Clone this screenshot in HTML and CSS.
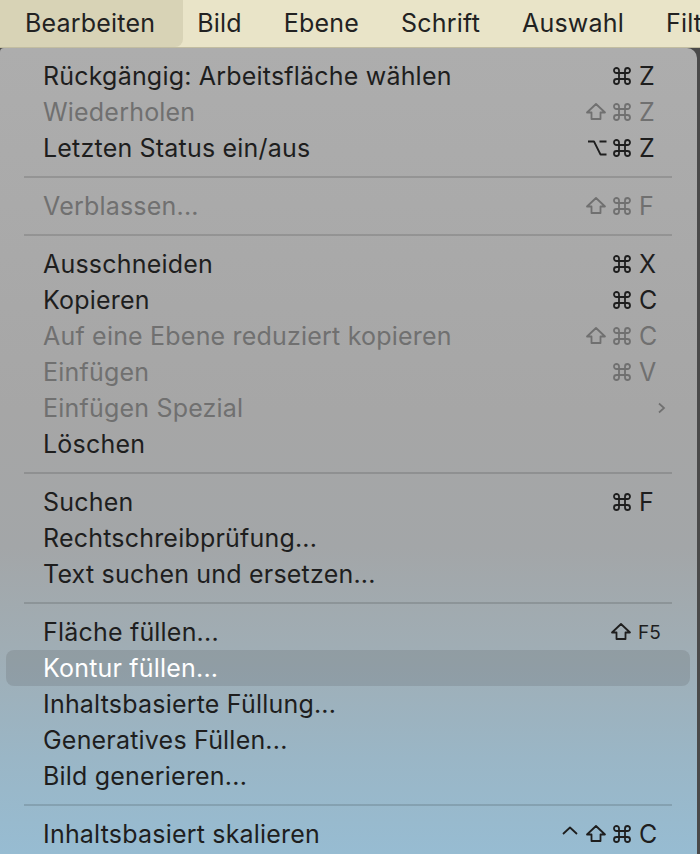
FILE: index.html
```html
<!DOCTYPE html>
<html lang="de">
<head>
<meta charset="utf-8">
<title>Bearbeiten</title>
<link rel="stylesheet" href="styles.css">
</head>
<body>
<div class="screen">
  <nav class="menubar">
    <span class="mb-item active">Bearbeiten</span>
    <span class="mb-item">Bild</span>
    <span class="mb-item">Ebene</span>
    <span class="mb-item">Schrift</span>
    <span class="mb-item">Auswahl</span>
    <span class="mb-item">Filter</span>
  </nav>
  <div class="menu">
    <div class="item"><span class="label">Rückgängig: Arbeitsfläche wählen</span><span class="sc"><span class="mods"><svg class="ic" viewBox="0 0 20 20"><path d="M7 4.5A2.5 2.5 0 1 0 4.5 7H15.5A2.5 2.5 0 1 0 13 4.5V15.5A2.5 2.5 0 1 0 15.5 13H4.5A2.5 2.5 0 1 0 7 15.5Z"/></svg></span><span class="key">Z</span></span></div>
    <div class="item disabled"><span class="label">Wiederholen</span><span class="sc"><span class="mods"><svg class="ic shift" viewBox="0 0 22 20"><path d="M11 2L20 10.5H15.5V17H6.5V10.5H2Z"/></svg><svg class="ic" viewBox="0 0 20 20"><path d="M7 4.5A2.5 2.5 0 1 0 4.5 7H15.5A2.5 2.5 0 1 0 13 4.5V15.5A2.5 2.5 0 1 0 15.5 13H4.5A2.5 2.5 0 1 0 7 15.5Z"/></svg></span><span class="key">Z</span></span></div>
    <div class="item"><span class="label">Letzten Status ein/aus</span><span class="sc"><span class="mods"><svg class="ic" viewBox="0 0 20 20"><path d="M1 3.5H7L13.5 16.5H19.5M12.5 3.5H19.5"/></svg><svg class="ic" viewBox="0 0 20 20"><path d="M7 4.5A2.5 2.5 0 1 0 4.5 7H15.5A2.5 2.5 0 1 0 13 4.5V15.5A2.5 2.5 0 1 0 15.5 13H4.5A2.5 2.5 0 1 0 7 15.5Z"/></svg></span><span class="key">Z</span></span></div>
    <div class="sep"></div>
    <div class="item disabled"><span class="label">Verblassen...</span><span class="sc"><span class="mods"><svg class="ic shift" viewBox="0 0 22 20"><path d="M11 2L20 10.5H15.5V17H6.5V10.5H2Z"/></svg><svg class="ic" viewBox="0 0 20 20"><path d="M7 4.5A2.5 2.5 0 1 0 4.5 7H15.5A2.5 2.5 0 1 0 13 4.5V15.5A2.5 2.5 0 1 0 15.5 13H4.5A2.5 2.5 0 1 0 7 15.5Z"/></svg></span><span class="key">F</span></span></div>
    <div class="sep"></div>
    <div class="item"><span class="label">Ausschneiden</span><span class="sc"><span class="mods"><svg class="ic" viewBox="0 0 20 20"><path d="M7 4.5A2.5 2.5 0 1 0 4.5 7H15.5A2.5 2.5 0 1 0 13 4.5V15.5A2.5 2.5 0 1 0 15.5 13H4.5A2.5 2.5 0 1 0 7 15.5Z"/></svg></span><span class="key">X</span></span></div>
    <div class="item"><span class="label">Kopieren</span><span class="sc"><span class="mods"><svg class="ic" viewBox="0 0 20 20"><path d="M7 4.5A2.5 2.5 0 1 0 4.5 7H15.5A2.5 2.5 0 1 0 13 4.5V15.5A2.5 2.5 0 1 0 15.5 13H4.5A2.5 2.5 0 1 0 7 15.5Z"/></svg></span><span class="key">C</span></span></div>
    <div class="item disabled"><span class="label">Auf eine Ebene reduziert kopieren</span><span class="sc"><span class="mods"><svg class="ic shift" viewBox="0 0 22 20"><path d="M11 2L20 10.5H15.5V17H6.5V10.5H2Z"/></svg><svg class="ic" viewBox="0 0 20 20"><path d="M7 4.5A2.5 2.5 0 1 0 4.5 7H15.5A2.5 2.5 0 1 0 13 4.5V15.5A2.5 2.5 0 1 0 15.5 13H4.5A2.5 2.5 0 1 0 7 15.5Z"/></svg></span><span class="key">C</span></span></div>
    <div class="item disabled"><span class="label">Einfügen</span><span class="sc"><span class="mods"><svg class="ic" viewBox="0 0 20 20"><path d="M7 4.5A2.5 2.5 0 1 0 4.5 7H15.5A2.5 2.5 0 1 0 13 4.5V15.5A2.5 2.5 0 1 0 15.5 13H4.5A2.5 2.5 0 1 0 7 15.5Z"/></svg></span><span class="key">V</span></span></div>
    <div class="item disabled"><span class="label">Einfügen Spezial</span><span class="sc"><span class="mods"></span><span class="key chev"><svg class="chevron" viewBox="0 0 9 12"><path d="M2 1.5L7 6L2 10.5"/></svg></span></span></div>
    <div class="item"><span class="label">Löschen</span></div>
    <div class="sep"></div>
    <div class="item"><span class="label">Suchen</span><span class="sc"><span class="mods"><svg class="ic" viewBox="0 0 20 20"><path d="M7 4.5A2.5 2.5 0 1 0 4.5 7H15.5A2.5 2.5 0 1 0 13 4.5V15.5A2.5 2.5 0 1 0 15.5 13H4.5A2.5 2.5 0 1 0 7 15.5Z"/></svg></span><span class="key">F</span></span></div>
    <div class="item"><span class="label">Rechtschreibprüfung...</span></div>
    <div class="item"><span class="label">Text suchen und ersetzen...</span></div>
    <div class="sep"></div>
    <div class="item"><span class="label">Fläche füllen...</span><span class="sc"><span class="mods"><svg class="ic shift" viewBox="0 0 22 20"><path d="M11 2L20 10.5H15.5V17H6.5V10.5H2Z"/></svg></span><span class="key small">F5</span></span></div>
    <div class="item selected"><span class="label">Kontur füllen...</span></div>
    <div class="item"><span class="label">Inhaltsbasierte Füllung...</span></div>
    <div class="item"><span class="label">Generatives Füllen...</span></div>
    <div class="item"><span class="label">Bild generieren...</span></div>
    <div class="sep"></div>
    <div class="item"><span class="label">Inhaltsbasiert skalieren</span><span class="sc"><span class="mods"><svg class="ic ctrl" viewBox="0 0 20 20"><path d="M3 10L10 3.5L17 10"/></svg><svg class="ic shift" viewBox="0 0 22 20"><path d="M11 2L20 10.5H15.5V17H6.5V10.5H2Z"/></svg><svg class="ic" viewBox="0 0 20 20"><path d="M7 4.5A2.5 2.5 0 1 0 4.5 7H15.5A2.5 2.5 0 1 0 13 4.5V15.5A2.5 2.5 0 1 0 15.5 13H4.5A2.5 2.5 0 1 0 7 15.5Z"/></svg></span><span class="key">C</span></span></div>
  </div>
</div>
</body>
</html>
```
FILE: styles.css
```css
html, body {
  margin: 0;
  padding: 0;
  background: #4a4a4a;
}
.screen {
  width: 700px;
  height: 854px;
  overflow: hidden;
  font-family: Inter, "Noto Sans", "DejaVu Sans", sans-serif;
  background: #4a4a4a;
}
.menubar {
  height: 47px;
  background: #e9e4c8;
  border-bottom: 1px solid #c2bda1;
  display: flex;
  align-items: stretch;
  font-size: 25px;
  letter-spacing: 0.2px;
  color: #222;
  white-space: nowrap;
  overflow: hidden;
}
.mb-item {
  display: flex;
  align-items: center;
  padding: 0 21px 2px 21px;
}
.mb-item:first-child {
  padding-left: 25px;
  padding-right: 28px;
}
.mb-item:nth-child(2) {
  padding-left: 14px;
}
.mb-item.active {
  background: #d8d3b6;
  border-radius: 0 0 8px 0;
}
.menu {
  width: 697px;
  height: 806px;
  box-sizing: border-box;
  padding: 10px 7px 0 6px;
  border-radius: 4px 10px 0 0;
  background: linear-gradient(180deg, #adadad 0%, #a6a6a6 45%, #a3a6a8 62%, #a0adb4 74%, #9ab6c6 88%, #97bcd2 100%);
  color: #1e1e1e;
  font-size: 25px;
  letter-spacing: 0.2px;
}
.item {
  height: 36px;
  display: flex;
  align-items: center;
  padding-left: 37px;
  border-radius: 8px;
  white-space: nowrap;
}
.item.disabled {
  color: #707070;
}
.item.selected {
  background: rgba(70, 70, 70, 0.16);
  color: #ffffff;
}
.label {
  flex: 1 1 auto;
}
.sc {
  display: flex;
  align-items: center;
}
.mods {
  display: flex;
  align-items: center;
  justify-content: flex-end;
  gap: 5px;
}
.ic {
  width: 20px;
  height: 20px;
  fill: none;
  stroke: currentColor;
  stroke-width: 1.8;
  stroke-linejoin: round;
}
.ic.shift {
  width: 22px;
}
.key {
  width: 58px;
  box-sizing: border-box;
  padding-left: 7px;
  font-size: 25px;
  letter-spacing: 0;
}
.key.small {
  font-size: 19px;
  padding-left: 6px;
}
.key.chev {
  padding-left: 25px;
  display: flex;
  align-items: center;
}
.chevron {
  width: 9px;
  height: 12px;
  fill: none;
  stroke: currentColor;
  stroke-width: 1.7;
}
.sep {
  height: 22px;
  display: flex;
  align-items: center;
  padding: 0 18px;
}
.sep::before {
  content: "";
  flex: 1;
  height: 2px;
  background: rgba(0, 0, 0, 0.13);
}
```
